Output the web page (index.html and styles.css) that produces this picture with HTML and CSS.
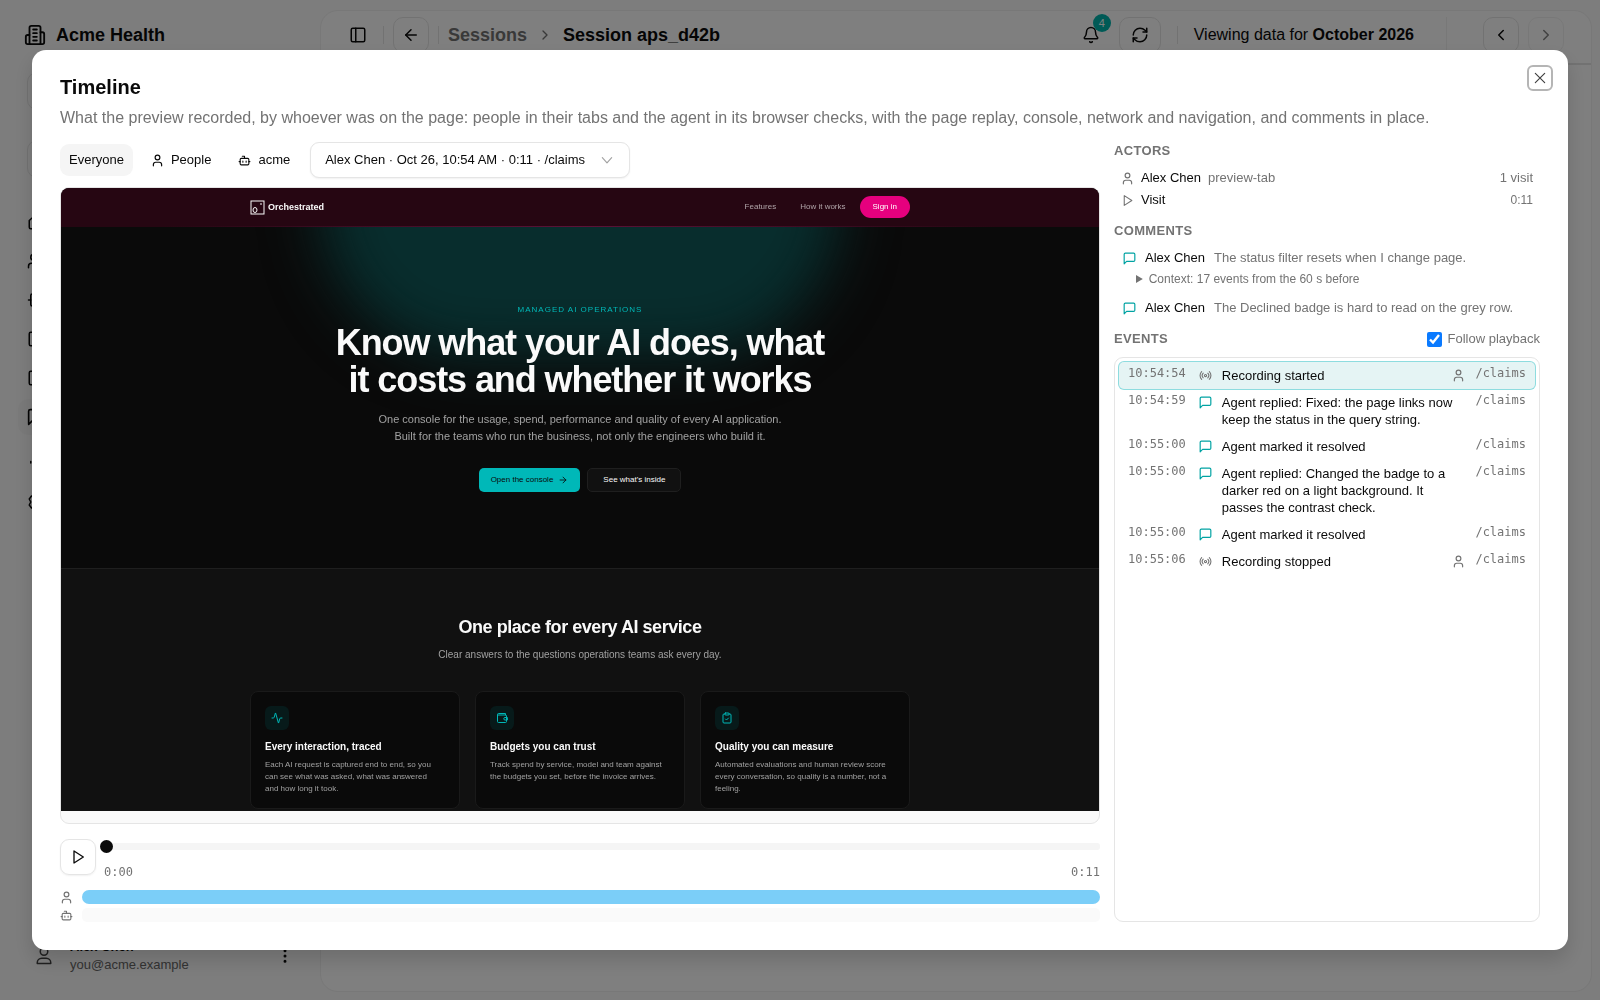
FILE: index.html
```html
<!DOCTYPE html>
<html lang="en">
<head>
  <meta charset="UTF-8">
  <meta name="viewport" content="width=device-width, initial-scale=1.0">
  <title>Session aps_d42b - Timeline</title>
  <link rel="stylesheet" href="styles.css">
</head>
<body>
  <!-- Icon sprite -->
  <svg class="sprite" aria-hidden="true">
    <symbol id="i-building" viewBox="0 0 24 24"><path d="M6 22V4a2 2 0 0 1 2-2h8a2 2 0 0 1 2 2v18Z"/><path d="M6 12H4a2 2 0 0 0-2 2v6a2 2 0 0 0 2 2h2"/><path d="M18 9h2a2 2 0 0 1 2 2v9a2 2 0 0 1-2 2h-2"/><path d="M10 6h4M10 10h4M10 14h4M10 18h4"/></symbol>
    <symbol id="i-panel" viewBox="0 0 24 24"><rect width="18" height="18" x="3" y="3" rx="2"/><path d="M9 3v18"/></symbol>
    <symbol id="i-back" viewBox="0 0 24 24"><path d="m12 19-7-7 7-7"/><path d="M19 12H5"/></symbol>
    <symbol id="i-forward" viewBox="0 0 24 24"><path d="M5 12h14"/><path d="m12 5 7 7-7 7"/></symbol>
    <symbol id="i-right" viewBox="0 0 24 24"><path d="m9 18 6-6-6-6"/></symbol>
    <symbol id="i-left" viewBox="0 0 24 24"><path d="m15 18-6-6 6-6"/></symbol>
    <symbol id="i-down" viewBox="0 0 24 24"><path d="m4 8 8 9 8-9"/></symbol>
    <symbol id="i-bell" viewBox="0 0 24 24"><path d="M10.268 21a2 2 0 0 0 3.464 0"/><path d="M3.262 15.326A1 1 0 0 0 4 17h16a1 1 0 0 0 .74-1.673C19.41 13.956 18 12.499 18 8A6 6 0 0 0 6 8c0 4.499-1.411 5.956-2.738 7.326"/></symbol>
    <symbol id="i-refresh" viewBox="0 0 24 24"><path d="M3 12a9 9 0 0 1 9-9 9.75 9.75 0 0 1 6.74 2.74L21 8"/><path d="M21 3v5h-5"/><path d="M21 12a9 9 0 0 1-9 9 9.75 9.75 0 0 1-6.74-2.74L3 16"/><path d="M8 16H3v5"/></symbol>
    <symbol id="i-close" viewBox="0 0 24 24"><path d="M20 4 4 20M4 4l16 16"/></symbol>
    <symbol id="i-user" viewBox="1 1 22 22"><circle cx="12" cy="7" r="4"/><path d="M19 21v-2a4 4 0 0 0-4-4H9a4 4 0 0 0-4 4v2"/></symbol>
    <symbol id="i-bot" viewBox="0 0 24 24"><path d="M12 8V4H8"/><rect width="16" height="12" x="4" y="8" rx="2"/><path d="M2 14h2M20 14h2M15 13v2M9 13v2"/></symbol>
    <symbol id="i-play" viewBox="0 0 24 24"><path d="M6 3 20 12 6 21Z"/></symbol>
    <symbol id="i-comment" viewBox="1 1 22 22"><path d="M21 15a2 2 0 0 1-2 2H7l-4 4V5a2 2 0 0 1 2-2h14a2 2 0 0 1 2 2Z"/></symbol>
    <symbol id="i-radio" viewBox="0 0 24 24"><circle cx="12" cy="12" r="2"/><path d="M4.900 19.100C1 15.200 1 8.800 4.900 4.900M7.800 16.200c-2.300-2.300-2.300-6.100 0-8.500M16.200 7.800c2.300 2.300 2.300 6.100 0 8.500M19.100 4.900C23 8.800 23 15.100 19.100 19"/></symbol>
    <symbol id="i-activity" viewBox="0 0 24 24"><path d="M22 12h-2.480a2 2 0 0 0-1.930 1.460l-2.350 8.360a.25.25 0 0 1-.48 0L9.240 2.180a.25.25 0 0 0-.48 0l-2.350 8.360A2 2 0 0 1 4.490 12H2"/></symbol>
    <symbol id="i-wallet" viewBox="0 0 24 24"><path d="M3 6h16a2 2 0 0 1 2 2v11a2 2 0 0 1-2 2H5a2 2 0 0 1-2-2V5a2 2 0 0 1 2-2h14v3"/><path d="M22 11h-4a2 2 0 0 0 0 5h4Z"/></symbol>
    <symbol id="i-clipboard" viewBox="0 0 24 24"><rect width="8" height="4" x="8" y="2" rx="1"/><path d="M16 4h2a2 2 0 0 1 2 2v14a2 2 0 0 1-2 2H6a2 2 0 0 1-2-2V6a2 2 0 0 1 2-2h2"/><path d="m9 14 2 2 4-4"/></symbol>
    <symbol id="i-home" viewBox="0 0 24 24"><path d="M3 10 12 2l9 8v9a2 2 0 0 1-2 2H5a2 2 0 0 1-2-2Z"/></symbol>
    <symbol id="i-users" viewBox="0 0 24 24"><circle cx="9" cy="7" r="4"/><path d="M2 21v-2a4 4 0 0 1 4-4h6a4 4 0 0 1 4 4v2M22 21v-2a4 4 0 0 0-3-3.870"/></symbol>
    <symbol id="i-chip" viewBox="0 0 24 24"><rect x="5" y="4" width="14" height="16" rx="2"/><path d="M2 12h3M19 12h3"/></symbol>
    <symbol id="i-chart" viewBox="0 0 24 24"><rect width="18" height="18" x="3" y="3" rx="2"/><path d="M8 11v2M13 8v8"/></symbol>
    <symbol id="i-wave" viewBox="0 0 24 24"><path d="M5 10v2M10 5v14"/></symbol>
    <symbol id="i-gear" viewBox="0 0 24 24"><circle cx="12" cy="12" r="3"/><path d="M10 2h4l1 3 3-1 3 4-2 4 2 4-3 4-3-1-1 3h-4l-1-3-3 1-3-4 2-4-2-4 3-4 3 1Z"/></symbol>
    <symbol id="i-avatar" viewBox="0 0 24 24"><circle cx="12" cy="6" r="5"/><path d="M3 22v-1a6 6 0 0 1 6-6h6a6 6 0 0 1 6 6v1Z"/></symbol>
    <symbol id="i-dots" viewBox="0 0 24 24"><circle cx="12" cy="5" r="1"/><circle cx="12" cy="12" r="1"/><circle cx="12" cy="19" r="1"/></symbol>
  </svg>

  <div class="app">
    <aside class="sidebar">
      <div class="brand"><svg class="icon brand-icon"><use href="#i-building"/></svg>Acme Health</div>
      <div class="side-box"></div>
      <div class="side-box"></div>
      <nav class="side-nav">
        <a href="#" aria-label="Home"><svg class="icon"><use href="#i-home"/></svg></a>
        <a href="#" aria-label="People"><svg class="icon"><use href="#i-users"/></svg></a>
        <a href="#" aria-label="Models"><svg class="icon"><use href="#i-chip"/></svg></a>
        <a href="#" aria-label="Reports"><svg class="icon"><use href="#i-chart"/></svg></a>
        <a href="#" aria-label="Panels"><svg class="icon"><use href="#i-panel"/></svg></a>
        <a href="#" class="active" aria-label="Sessions"><svg class="icon"><use href="#i-comment"/></svg></a>
        <a href="#" aria-label="Usage"><svg class="icon"><use href="#i-wave"/></svg></a>
        <a href="#" aria-label="Settings"><svg class="icon"><use href="#i-gear"/></svg></a>
      </nav>
      <div class="account">
        <svg class="icon account-icon"><use href="#i-avatar"/></svg>
        <div class="account-text">
          <strong>Alex Chen</strong>
          <span>you@acme.example</span>
        </div>
        <svg class="icon"><use href="#i-dots"/></svg>
      </div>
    </aside>

    <main class="panel">
      <header class="topbar">
        <button class="plain-btn" aria-label="Toggle sidebar"><svg class="icon"><use href="#i-panel"/></svg></button>
        <span class="sep"></span>
        <button class="box-btn" aria-label="Back"><svg class="icon"><use href="#i-back"/></svg></button>
        <span class="sep"></span>
        <nav class="crumbs">
          <a href="#">Sessions</a>
          <svg class="icon crumb-icon"><use href="#i-right"/></svg>
          <span>Session aps_d42b</span>
        </nav>
        <button class="plain-btn bell" aria-label="Notifications"><svg class="icon"><use href="#i-bell"/></svg><span class="badge">4</span></button>
        <button class="box-btn wide" aria-label="Refresh"><svg class="icon"><use href="#i-refresh"/></svg></button>
        <span class="sep sep-period"></span>
        <span class="period">Viewing data for <strong>October 2026</strong></span>
        <span class="sep tall"></span>
        <button class="box-btn" aria-label="Previous month"><svg class="icon"><use href="#i-left"/></svg></button>
        <button class="box-btn" aria-label="Next month" disabled><svg class="icon"><use href="#i-right"/></svg></button>
      </header>
    </main>
  </div>

  <div class="overlay">
    <div class="dialog" role="dialog" aria-labelledby="dialog-title">
      <button class="close" aria-label="Close"><svg class="icon"><use href="#i-close"/></svg></button>
      <h2 class="dialog-title" id="dialog-title">Timeline</h2>
      <p class="dialog-text">What the preview recorded, by whoever was on the page: people in their tabs and the agent in its browser checks, with the page replay, console, network and navigation, and comments in place.</p>

      <div class="columns">
        <section class="player">
          <div class="filters">
            <button class="filter active">Everyone</button>
            <button class="filter"><svg class="icon"><use href="#i-user"/></svg>People</button>
            <button class="filter"><svg class="icon"><use href="#i-bot"/></svg>acme</button>
            <div class="visit">
              <select aria-label="Visit">
                <option>Alex Chen · Oct 26, 10:54 AM · 0:11 · /claims</option>
              </select>
              <svg class="icon visit-arrow"><use href="#i-down"/></svg>
            </div>
          </div>

          <div class="frame">
            <div class="site">
              <header class="site-header">
                <div class="site-bar">
                  <svg class="site-logo" viewBox="0 0 15 15"><rect x="1" y="1" width="13" height="13"/><ellipse cx="5" cy="10" rx="2" ry="2.500"/><path d="M11 3v2"/></svg>
                  <span class="site-name">Orchestrated</span>
                  <a href="#">Features</a>
                  <a href="#">How it works</a>
                  <a href="#" class="sign-in">Sign in</a>
                </div>
              </header>
              <section class="hero">
                <div class="glow"></div>
                <p class="eyebrow">MANAGED AI OPERATIONS</p>
                <h1>Know what your AI does, what<br>it costs and whether it works</h1>
                <p class="lead">One console for the usage, spend, performance and quality of every AI application.<br>Built for the teams who run the business, not only the engineers who build it.</p>
                <div class="hero-actions">
                  <button class="cta">Open the console<svg class="icon"><use href="#i-forward"/></svg></button>
                  <button class="cta dark">See what's inside</button>
                </div>
              </section>
              <section class="services">
                <h2>One place for every AI service</h2>
                <p class="services-text">Clear answers to the questions operations teams ask every day.</p>
                <div class="cards">
                  <article class="card">
                    <div class="card-icon"><svg class="icon"><use href="#i-activity"/></svg></div>
                    <h3>Every interaction, traced</h3>
                    <p>Each AI request is captured end to end, so you<br>can see what was asked, what was answered<br>and how long it took.</p>
                  </article>
                  <article class="card">
                    <div class="card-icon"><svg class="icon"><use href="#i-wallet"/></svg></div>
                    <h3>Budgets you can trust</h3>
                    <p>Track spend by service, model and team against<br>the budgets you set, before the invoice arrives.</p>
                  </article>
                  <article class="card">
                    <div class="card-icon"><svg class="icon"><use href="#i-clipboard"/></svg></div>
                    <h3>Quality you can measure</h3>
                    <p>Automated evaluations and human review score<br>every conversation, so quality is a number, not a<br>feeling.</p>
                  </article>
                </div>
              </section>
            </div>
          </div>

          <div class="controls">
            <button class="play" aria-label="Play"><svg class="icon"><use href="#i-play"/></svg></button>
            <div class="scrub">
              <input type="range" min="0" max="11" value="0" aria-label="Playback position">
              <div class="times"><span>0:00</span><span>0:11</span></div>
            </div>
          </div>
          <div class="lane"><svg class="icon"><use href="#i-user"/></svg><div class="lane-bar people"></div></div>
          <div class="lane"><svg class="icon"><use href="#i-bot"/></svg><div class="lane-bar"></div></div>
        </section>

        <aside class="details">
          <h3 class="label">ACTORS</h3>
          <div class="actor"><svg class="icon"><use href="#i-user"/></svg><span>Alex Chen</span><span class="muted">preview-tab</span><span class="muted end">1 visit</span></div>
          <div class="actor"><svg class="icon"><use href="#i-play"/></svg><span>Visit</span><span class="muted end small">0:11</span></div>

          <h3 class="label comments-label">COMMENTS</h3>
          <div class="comment"><svg class="icon"><use href="#i-comment"/></svg><span>Alex Chen</span><span class="muted">The status filter resets when I change page.</span></div>
          <details class="context"><summary>Context: 17 events from the 60 s before</summary></details>
          <div class="comment"><svg class="icon"><use href="#i-comment"/></svg><span>Alex Chen</span><span class="muted">The Declined badge is hard to read on the grey row.</span></div>

          <div class="events-head">
            <h3 class="label">EVENTS</h3>
            <label class="follow" for="follow"><input type="checkbox" id="follow" checked>Follow playback</label>
          </div>
          <ul class="events">
            <li class="event current"><time>10:54:54</time><svg class="icon"><use href="#i-radio"/></svg><span class="what">Recording started</span><svg class="icon who"><use href="#i-user"/></svg><span class="path">/claims</span></li>
            <li class="event"><time>10:54:59</time><svg class="icon teal"><use href="#i-comment"/></svg><span class="what">Agent replied: Fixed: the page links now keep the status in the query string.</span><span class="path">/claims</span></li>
            <li class="event"><time>10:55:00</time><svg class="icon teal"><use href="#i-comment"/></svg><span class="what">Agent marked it resolved</span><span class="path">/claims</span></li>
            <li class="event"><time>10:55:00</time><svg class="icon teal"><use href="#i-comment"/></svg><span class="what">Agent replied: Changed the badge to a darker red on a light background. It passes the contrast check.</span><span class="path">/claims</span></li>
            <li class="event"><time>10:55:00</time><svg class="icon teal"><use href="#i-comment"/></svg><span class="what">Agent marked it resolved</span><span class="path">/claims</span></li>
            <li class="event"><time>10:55:06</time><svg class="icon"><use href="#i-radio"/></svg><span class="what">Recording stopped</span><svg class="icon who"><use href="#i-user"/></svg><span class="path">/claims</span></li>
          </ul>
        </aside>
      </div>
    </div>
  </div>
</body>
</html>
```
FILE: styles.css
```css
* {
  margin: 0;
  padding: 0;
  box-sizing: border-box;
}
body {
  font-family: "Liberation Sans", Arial, sans-serif;
  font-size: 13px;
  line-height: 18px;
  color: #0a0a0a;
  background: #fafafa;
  height: 100vh;
  overflow: hidden;
}
button, select, input {
  font: inherit;
  color: inherit;
}
button {
  border: none;
  background: none;
  cursor: pointer;
}
a {
  color: inherit;
  text-decoration: none;
}
ul {
  list-style: none;
}
.sprite {
  display: none;
}
.icon {
  display: block;
  flex: none;
  width: 18px;
  height: 18px;
  fill: none;
  stroke: currentColor;
  stroke-width: 2;
  stroke-linecap: round;
  stroke-linejoin: round;
}

/* App behind the dialog */
.app {
  display: flex;
  height: 100vh;
}
.sidebar {
  width: 320px;
  padding: 18px 26px 26px 24px;
  display: flex;
  flex-direction: column;
}
.brand {
  display: flex;
  align-items: center;
  gap: 10px;
  height: 34px;
  font-size: 18px;
  font-weight: bold;
}
.brand-icon {
  width: 22px;
  height: 22px;
}
.side-box {
  height: 38px;
  margin: 20px 0 0 3px;
  border: 1px solid #e5e5e5;
  border-radius: 10px;
}
.side-box + .side-box {
  margin-top: 30px;
}
.side-nav {
  margin: 26px -6px 0;
  display: flex;
  flex-direction: column;
  gap: 3px;
}
.side-nav a {
  padding: 9px;
  border-radius: 10px;
}
.side-nav .active {
  background: #f5f5f5;
}
.side-nav .active + a {
  margin-top: 7px;
}
.account {
  margin-top: auto;
  display: flex;
  align-items: center;
  gap: 17px;
}
.account-icon {
  margin-left: 11px;
  stroke: #404040;
}
.account-text {
  flex: 1;
  color: #666;
}
.account-text strong,
.account-text span {
  display: block;
}
.account-text strong {
  color: #0a0a0a;
}
.panel {
  flex: 1;
  margin: 10px 8px 8px 0;
  background: #fff;
  border: 1px solid #f0f0f0;
  border-radius: 18px;
}
.topbar {
  display: flex;
  align-items: center;
  height: 54px;
  padding: 0 27px 4px;
  border-bottom: 2px solid #e5e5e5;
}
.plain-btn,
.box-btn {
  display: flex;
  align-items: center;
  justify-content: center;
  width: 36px;
  height: 36px;
}
.plain-btn {
  width: 20px;
}
.box-btn {
  border: 1px solid #e5e5e5;
  border-radius: 10px;
}
.box-btn:disabled {
  opacity: 0.5;
}
.box-btn + .box-btn {
  margin-left: 9px;
}
.sep {
  width: 1px;
  height: 18px;
  margin: 0 9px;
  background: #e5e5e5;
}
.plain-btn + .sep {
  margin-left: 15px;
}
.crumbs {
  flex: 1;
  display: flex;
  align-items: center;
  gap: 10px;
  font-size: 18px;
  font-weight: bold;
}
.crumbs a,
.crumb-icon {
  color: #737373;
}
.crumb-icon {
  width: 16px;
  height: 16px;
}
.bell {
  position: relative;
  margin-right: 18px;
}
.badge {
  position: absolute;
  top: -3px;
  left: 12px;
  width: 18px;
  height: 18px;
  border-radius: 9px;
  background: #00b5ad;
  color: #fff;
  font-size: 11px;
}
.wide {
  width: 42px;
}
.sep-period {
  margin: 0 16px;
}
.period {
  font-size: 16px;
}
.tall {
  height: 36px;
  margin: 0 36px 0 32px;
  background: #f0f0f0;
}

/* Dialog */
.overlay {
  position: fixed;
  inset: 0;
  padding: 5vh 32px;
  background: rgba(0, 0, 0, 0.5);
}
.dialog {
  position: relative;
  height: 100%;
  padding: 28px;
  display: flex;
  flex-direction: column;
  background: #fff;
  border-radius: 14px;
  box-shadow: 0 10px 20px rgba(0, 0, 0, 0.15);
}
.close {
  position: absolute;
  top: 15px;
  right: 15px;
  width: 26px;
  height: 26px;
  padding: 4px;
  border: 2px solid #b5b5b5;
  border-radius: 6px;
  color: #404040;
}
.close .icon {
  width: 14px;
  height: 14px;
}
.dialog-title {
  font-size: 20px;
  line-height: 18px;
}
.dialog-text {
  margin: 12px 0 14px;
  font-size: 16px;
  line-height: 20px;
  color: #737373;
}
.columns {
  flex: 1;
  min-height: 0;
  display: flex;
  gap: 14px;
}

/* Player */
.player {
  flex: 1;
  min-width: 0;
  display: flex;
  flex-direction: column;
}
.filters {
  display: flex;
  align-items: center;
  gap: 9px;
  height: 36px;
  margin-bottom: 9px;
}
.filter {
  display: flex;
  align-items: center;
  gap: 7px;
  height: 32px;
  padding: 0 9px;
  border-radius: 9px;
}
.filter .icon {
  width: 13px;
  height: 13px;
}
.filter.active {
  background: #f5f5f5;
}
.visit {
  display: flex;
  align-items: center;
  margin-left: 2px;
}
.visit select {
  appearance: none;
  height: 36px;
  width: 320px;
  padding: 0 14px;
  border: 1px solid #e5e5e5;
  border-radius: 9px;
  background: #fff;
  box-shadow: 0 1px 2px rgba(0, 0, 0, 0.06);
}
.visit-arrow {
  width: 14px;
  height: 14px;
  margin-left: -30px;
  color: #a3a3a3;
}
.frame {
  flex: 1;
  min-height: 0;
  border: 1px solid #e5e5e5;
  border-radius: 9px;
  background: #fafafa;
  overflow: hidden;
}
.controls {
  display: flex;
  gap: 4px;
  margin: 15px 0 7px;
}
.play {
  display: flex;
  align-items: center;
  justify-content: center;
  width: 36px;
  height: 36px;
  border: 1px solid #e5e5e5;
  border-radius: 9px;
  box-shadow: 0 1px 2px rgba(0, 0, 0, 0.06);
}
.play .icon {
  width: 16px;
  height: 16px;
}
.scrub {
  flex: 1;
  height: 44px;
}
.scrub input {
  appearance: none;
  display: block;
  width: 100%;
  height: 14px;
  background: none;
}
.scrub input::-webkit-slider-runnable-track {
  height: 7px;
  border-radius: 3px;
  background: #f5f5f5;
}
.scrub input::-webkit-slider-thumb {
  appearance: none;
  width: 13px;
  height: 13px;
  margin-top: -3px;
  border-radius: 50%;
  background: #0a0a0a;
}
.times {
  display: flex;
  justify-content: space-between;
  margin: 11px 0 0 4px;
  font-family: "DejaVu Sans Mono", monospace;
  font-size: 12px;
  line-height: 16px;
  color: #737373;
}
.lane {
  display: flex;
  align-items: center;
  gap: 9px;
  color: #737373;
}
.lane + .lane {
  margin-top: 4px;
}
.lane .icon {
  width: 13px;
  height: 13px;
}
.lane-bar {
  flex: 1;
  height: 14px;
  border-radius: 5px;
  background: #fafafa;
}
.lane-bar.people {
  border-radius: 7px;
  background: #7bcef8;
}

/* Replayed page */
.site {
  background: #0a0a0a;
  color: #fafafa;
  font-size: 8px;
  line-height: 12px;
}
.site-header {
  background: #260612;
  border-bottom: 1px solid;
  border-image: linear-gradient(90deg, #260612 10%, #5c1238 50%, #260612 90%) 1;
}
.site-bar {
  display: flex;
  align-items: center;
  width: 660px;
  height: 38px;
  margin: 0 auto;
  color: #b0a4a8;
}
.site-logo {
  width: 15px;
  height: 15px;
  fill: none;
  stroke: #fafafa;
}
.site-name {
  flex: 1;
  margin-left: 3px;
  color: #fafafa;
  font-size: 9px;
  font-weight: bold;
}
.site-bar a {
  margin-left: 24px;
}
.site-bar .sign-in {
  margin-left: 14px;
  padding: 5px 13px;
  border-radius: 11px;
  background: #e6007e;
  color: #fff;
}
.hero {
  position: relative;
  height: 341px;
  padding-top: 77px;
  text-align: center;
  overflow: hidden;
}
.hero > * {
  position: relative;
}
.hero .glow {
  position: absolute;
  top: -180px;
  left: 50%;
  width: 520px;
  height: 310px;
  margin-left: -260px;
  border-radius: 180px;
  background: #082d2d;
  filter: blur(28px);
}
.eyebrow {
  color: #00b8b8;
  letter-spacing: 1px;
}
.hero h1 {
  margin: 8px 0 13px;
  font-size: 36px;
  line-height: 37px;
  letter-spacing: -0.03em;
}
.lead {
  font-size: 11px;
  line-height: 17px;
  color: #a1a1a1;
}
.hero-actions {
  display: flex;
  justify-content: center;
  gap: 7px;
  margin-top: 23px;
}
.cta {
  display: flex;
  align-items: center;
  gap: 5px;
  height: 24px;
  padding: 0 12px;
  border-radius: 5px;
  background: #00b8b8;
  color: #0a0a0a;
}
.cta .icon {
  width: 10px;
  height: 10px;
}
.cta.dark {
  padding: 0 15px;
  border: 1px solid #1f1f1f;
  background: #111;
  color: #fafafa;
}
.services {
  padding: 47px 0 2px;
  border-top: 1px solid #1f1f1f;
  background: #111;
  text-align: center;
}
.services h2 {
  font-size: 18px;
  line-height: 22px;
  letter-spacing: -0.025em;
}
.services-text {
  margin: 11px 0 30px;
  font-size: 10px;
  color: #a1a1a1;
}
.cards {
  display: grid;
  grid-template-columns: repeat(3, 1fr);
  gap: 15px;
  width: 660px;
  margin: 0 auto;
  text-align: left;
}
.card {
  height: 118px;
  padding: 14px;
  border: 1px solid #1a1a1a;
  border-radius: 8px;
  background: #0a0a0a;
}
.card-icon {
  display: flex;
  align-items: center;
  justify-content: center;
  width: 24px;
  height: 24px;
  border-radius: 6px;
  background: #071a1a;
  color: #00b8b8;
}
.card-icon .icon {
  width: 12px;
  height: 12px;
}
.card h3 {
  margin: 11px 0 6px;
  font-size: 10px;
  line-height: 12px;
}
.card p {
  color: #a1a1a1;
}

/* Details */
.details {
  width: 426px;
  display: flex;
  flex-direction: column;
}
.label {
  font-size: 13px;
  line-height: 18px;
  letter-spacing: 0.025em;
  color: #737373;
}
.muted {
  color: #737373;
}
.end {
  margin-left: auto;
}
.small {
  font-size: 12px;
}
.actor {
  display: flex;
  align-items: center;
  gap: 7px;
  height: 22px;
  padding: 0 7px;
}
.actor .icon {
  width: 13px;
  height: 13px;
  color: #737373;
}
.label + .actor {
  margin-top: 7px;
}
.comments-label {
  margin: 11px 0 8px;
}
.comment {
  display: flex;
  align-items: center;
  gap: 9px;
  height: 20px;
  padding-left: 9px;
}
.comment .icon {
  width: 13px;
  height: 13px;
  color: #00a3a3;
}
.context {
  margin: 2px 0 10px 22px;
  font-size: 12px;
  color: #737373;
}
.events-head {
  display: flex;
  justify-content: space-between;
  margin: 12px 0 9px;
}
.follow {
  display: flex;
  align-items: center;
  gap: 6px;
  color: #737373;
}
.follow input {
  width: 15px;
  height: 15px;
  accent-color: #0a7aff;
}
.events {
  flex: 1;
  padding: 4px;
  border: 1px solid #e5e5e5;
  border-radius: 9px;
}
.event {
  display: flex;
  align-items: flex-start;
  padding: 5px 9px;
  line-height: 17px;
  border-radius: 5px;
}
.event.current {
  background: #e5f4f4;
  box-shadow: 0 0 0 1px #8edcdf;
}
.event time,
.path {
  font-family: "DejaVu Sans Mono", monospace;
  font-size: 12px;
  line-height: 13px;
  color: #737373;
}
.event .icon {
  width: 13px;
  height: 13px;
  margin: 2px 10px 0 13px;
  color: #737373;
}
.event .teal {
  color: #00a3a3;
}
.what {
  flex: 1;
}
.path {
  margin-left: 10px;
}
.event .who {
  margin: 2px 0 0;
}
```
